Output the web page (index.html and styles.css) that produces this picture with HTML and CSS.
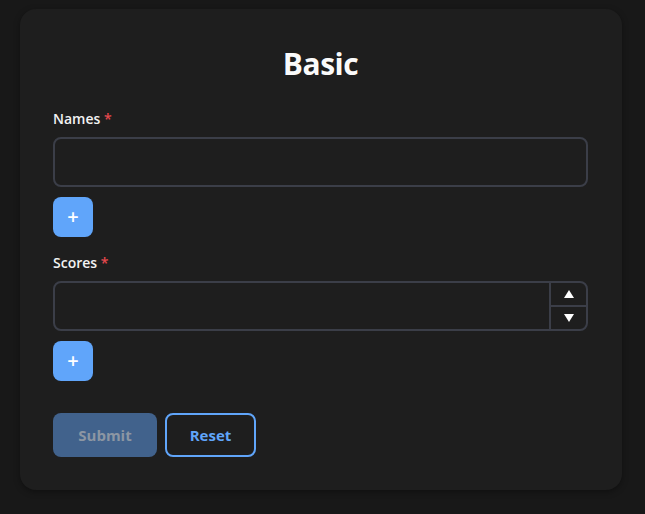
FILE: index.html
```html
<!DOCTYPE html>
<html>
<head>
<meta charset="utf-8">
<link rel="stylesheet" href="styles.css">
</head>
<body>
<div class="card">
  <h1 class="title">Basic</h1>
  <div class="field">
    <label class="label">Names <span class="req">*</span></label>
    <div class="input"></div>
    <button class="add">+</button>
  </div>
  <div class="field">
    <label class="label">Scores <span class="req">*</span></label>
    <div class="input number">
      <div class="spin">
        <div class="spin-btn"><svg width="10" height="8" viewBox="0 0 10 8"><polygon points="5,0 10,8 0,8" fill="#fff"/></svg></div>
        <div class="spin-btn"><svg width="10" height="8" viewBox="0 0 10 8"><polygon points="0,0 10,0 5,8" fill="#fff"/></svg></div>
      </div>
    </div>
    <button class="add">+</button>
  </div>
  <div class="actions">
    <button class="submit">Submit</button>
    <button class="reset">Reset</button>
  </div>
</div>
</body>
</html>
```
FILE: styles.css
```css
html, body {
  margin: 0;
  padding: 0;
  background: #181818;
  font-family: "Open Sans", "Lato", sans-serif;
  color: #f2f2f2;
}
body {
  padding: 9px 23px 24px 20px;
}
.card {
  background: #1e1e1e;
  border-radius: 16px;
  padding: 34px 34px 33px 33px;
  box-shadow: 0 2px 6px rgba(0,0,0,0.35);
  display: flex;
  flex-direction: column;
}
.title {
  margin: 0 0 24px 0;
  text-align: center;
  font-size: 30px;
  font-weight: 700;
  line-height: 42px;
  letter-spacing: -0.5px;
  color: #fafafa;
}
.field {
  display: flex;
  flex-direction: column;
  align-items: flex-start;
  margin-bottom: 16px;
}
.label {
  font-size: 14px;
  font-weight: 600;
  line-height: 20px;
  margin-bottom: 8px;
}
.req {
  color: #e5484d;
}
.input {
  align-self: stretch;
  height: 46px;
  border: 2px solid #3b3e48;
  border-radius: 8px;
  display: flex;
  justify-content: flex-end;
}
.spin {
  width: 35px;
  border-left: 2px solid #3b3e48;
  display: flex;
  flex-direction: column;
}
.spin-btn {
  flex: 1;
  display: flex;
  align-items: center;
  justify-content: center;
}
.spin-btn + .spin-btn {
  border-top: 2px solid #3b3e48;
}
.add {
  margin-top: 10px;
  width: 40px;
  height: 40px;
  border: none;
  border-radius: 8px;
  background: #60a5fa;
  color: #fff;
  font-family: "Open Sans", sans-serif;
  font-size: 20px;
  font-weight: 600;
  line-height: 1;
  padding: 0;
}
.actions {
  display: flex;
  gap: 8px;
  margin-top: 16px;
}
.submit, .reset {
  height: 44px;
  border-radius: 8px;
  font-family: "Open Sans", sans-serif;
  font-size: 15px;
  font-weight: 700;
  padding: 0;
}
.submit {
  width: 104px;
  border: none;
  background: #41628c;
  color: #8c96a3;
}
.reset {
  width: 91px;
  border: 2px solid #60a5fa;
  background: transparent;
  color: #60a5fa;
}
```
